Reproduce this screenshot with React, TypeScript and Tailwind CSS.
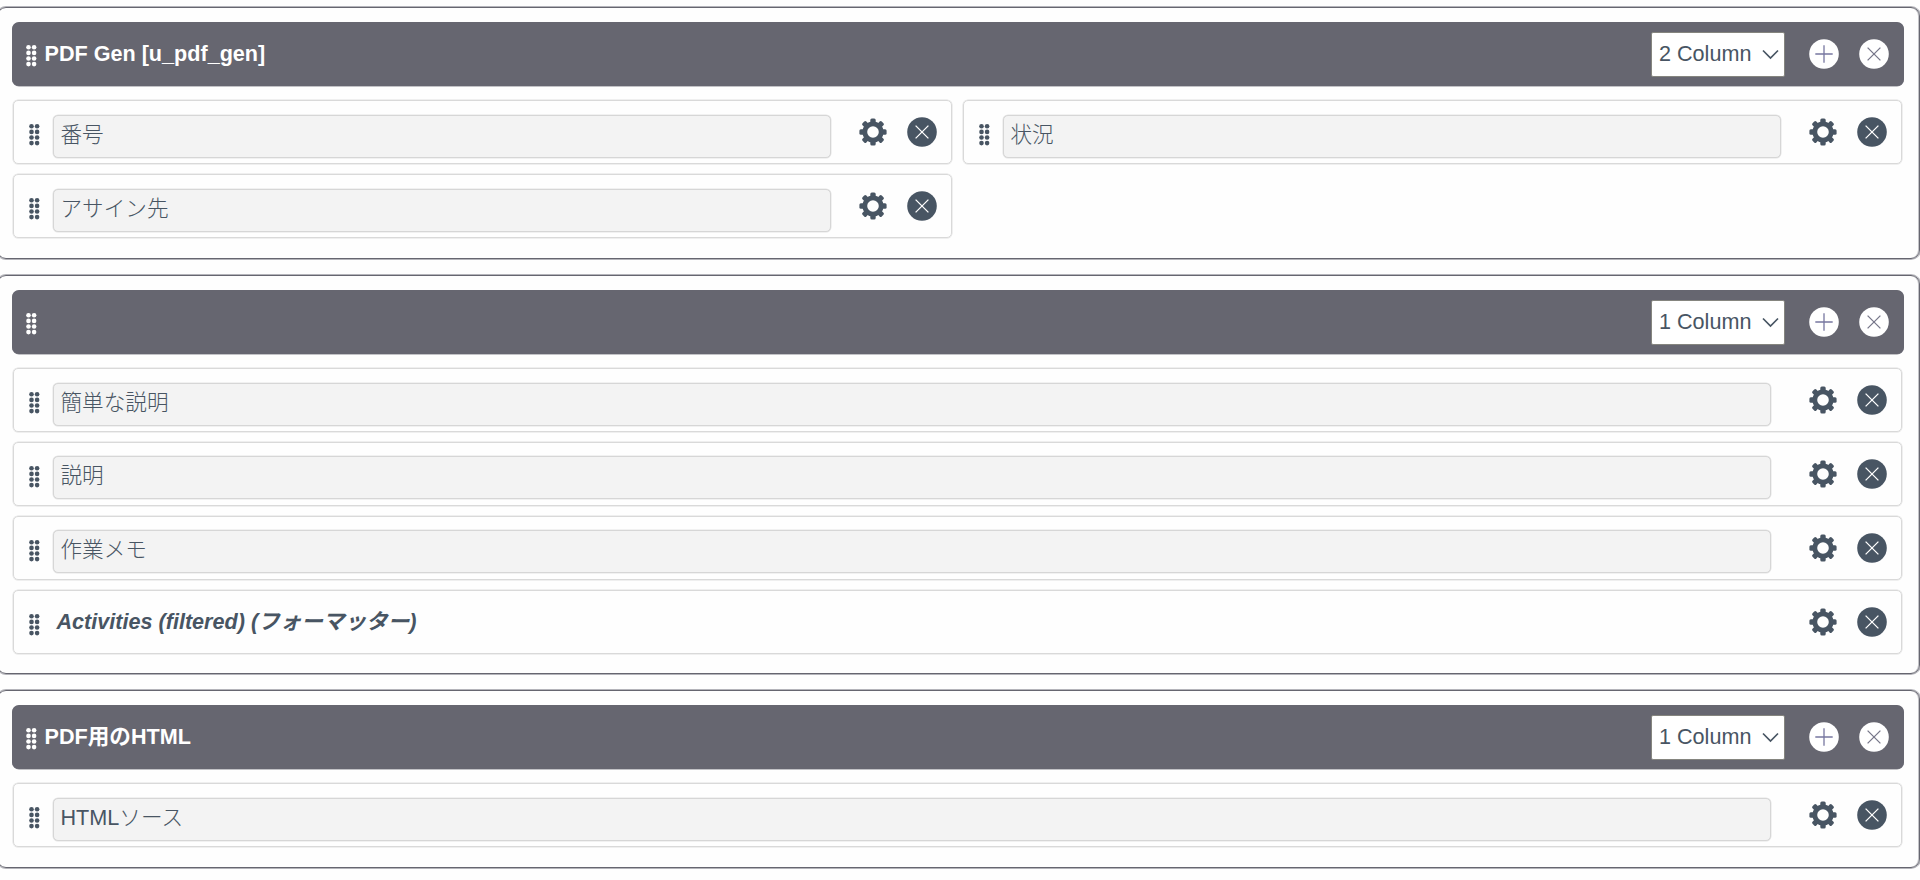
import type { ReactNode } from "react";
import { clsx } from "clsx";

interface Field {
  label: string;
  formatter?: boolean;
}

interface Section {
  id: string;
  title: string;
  layout: string;
  columns: Field[][];
}

const SECTIONS: Section[] = [
  {
    id: "main",
    title: "PDF Gen [u_pdf_gen]",
    layout: "2 Column",
    columns: [[{ label: "番号" }, { label: "アサイン先" }], [{ label: "状況" }]],
  },
  {
    id: "details",
    title: "",
    layout: "1 Column",
    columns: [
      [
        { label: "簡単な説明" },
        { label: "説明" },
        { label: "作業メモ" },
        { label: "Activities (filtered) (フォーマッター)", formatter: true },
      ],
    ],
  },
  {
    id: "html",
    title: "PDF用のHTML",
    layout: "1 Column",
    columns: [[{ label: "HTMLソース" }]],
  },
];

export default function App() {
  return (
    <div className="h-[880px] w-full overflow-hidden bg-[#fefefe] pt-[7px] font-['Liberation_Sans','Noto_Sans_CJK_JP',sans-serif] text-[21.6px] leading-[30px] text-[#485563]">
      <div className="-ml-[3px] flex flex-col gap-[16px]">
        {SECTIONS.map((s) => (
          <FormSection key={s.id} section={s} />
        ))}
      </div>
    </div>
  );
}

function FormSection({ section }: { section: Section }) {
  const split = section.columns.length > 1;

  return (
    <section className="rounded-[9px] border border-[#666670] pr-[15px] pb-[19.4px] pl-[14px] pt-[14.4px] shadow-[0_0_0_1px_#b4b4ba,inset_-1px_0_#c4c4c8]">
      <header className="flex h-[64px] items-center rounded-[7px] bg-[#666670] pr-[15.5px] pl-[14px] text-white shadow-[0_0.5px_0_#85858d]">
        <Grip className="mt-1 shrink-0" />
        <h2 className="ml-[7.5px] flex-1 font-bold">{section.title}</h2>
        <button className="flex h-[45px] w-[134px] items-center justify-between rounded-[2px] border border-[#85857f] bg-white pr-[5px] pl-[7.5px] text-[#485563]">
          {section.layout}
          <svg width="17" height="11" viewBox="0 0 17 11" fill="none" stroke="currentColor" strokeWidth="1.7">
            <path d="M1 1.5 8.5 9 16 1.5" />
          </svg>
        </button>
        <CircleButton className="ml-[24.5px]" label="Add" mark="#7777a0">
          <path d="M15 6.3v17.4M6.3 15h17.4" />
        </CircleButton>
        <CircleButton className="ml-[19.5px]" label="Remove section" mark="#77778a">
          <path d="m8.6 8.6 12.8 12.8M21.4 8.6 8.6 21.4" />
        </CircleButton>
      </header>

      <div className="mt-[14px] mr-[2px] ml-px flex gap-[11px]">
        {section.columns.map((fields, i) => (
          <ul key={i} className="flex flex-1 flex-col gap-[9.85px]">
            {fields.map((f) => (
              <FieldRow key={f.label} field={f} wide={!split} />
            ))}
          </ul>
        ))}
      </div>
    </section>
  );
}

function FieldRow({ field, wide }: { field: Field; wide: boolean }) {
  return (
    <li className="flex h-[64px] rounded-[5px] border border-[#d9d9d9] pr-[14px] pl-[15px] shadow-[0_0_0_0.5px_#e0e0e0]">
      <Grip className="mt-[23px] shrink-0" />
      {field.formatter ? (
        <span className="ml-[16.5px] mt-[16px] flex-1 font-bold italic">{field.label}</span>
      ) : (
        <div
          className={clsx(
            "ml-[13px] mt-[13.5px] h-[43px] flex-1 rounded-[5px] border border-[#d6d6d6] bg-[#f3f3f3] pt-[4px] pl-[6.5px] font-light shadow-[0_0_0_0.5px_#e4e4e4]",
            wide ? "mr-[38px]" : "mr-[28px]",
          )}
        >
          {field.label}
        </div>
      )}
      <button aria-label="Configure" className="mt-[17px] size-[28px] shrink-0">
        <Gear />
      </button>
      <CircleButton className="mt-[16px] ml-[20px]" label="Remove field" mark="#ffffff">
        <path d="m8.6 8.6 12.8 12.8M21.4 8.6 8.6 21.4" />
      </CircleButton>
    </li>
  );
}

function CircleButton({
  label,
  mark,
  className,
  children,
}: {
  label: string;
  mark: string;
  className?: string;
  children: ReactNode;
}) {
  return (
    <button aria-label={label} className={clsx("size-[30px] shrink-0", className)}>
      <svg width="30" height="30" viewBox="0 0 30 30">
        <circle cx="15" cy="15" r="14.8" fill="currentColor" />
        <g stroke={mark} strokeWidth="1.3" fill="none">
          {children}
        </g>
      </svg>
    </button>
  );
}

// Drag handle: 2 x 4 dots
function Grip({ className }: { className?: string }) {
  return (
    <svg width="11" height="22" viewBox="0 0 11 22" fill="currentColor" className={className} aria-hidden>
      {[2.3, 7.9, 13.5, 19.1].map((y) => (
        <g key={y}>
          <circle cx="2.5" cy={y} r="2.3" />
          <circle cx="8.1" cy={y} r="2.3" />
        </g>
      ))}
    </svg>
  );
}

function Gear() {
  return (
    <svg width="28" height="28" viewBox="-14 -14 28 28" fill="currentColor" aria-hidden>
      <circle r="8.2" fill="none" stroke="currentColor" strokeWidth="4.8" />
      {[0, 45, 90, 135, 180, 225, 270, 315].map((a) => (
        <rect key={a} x="-2.7" y="-13.6" width="5.4" height="6" rx="1.5" transform={`rotate(${a})`} />
      ))}
    </svg>
  );
}
